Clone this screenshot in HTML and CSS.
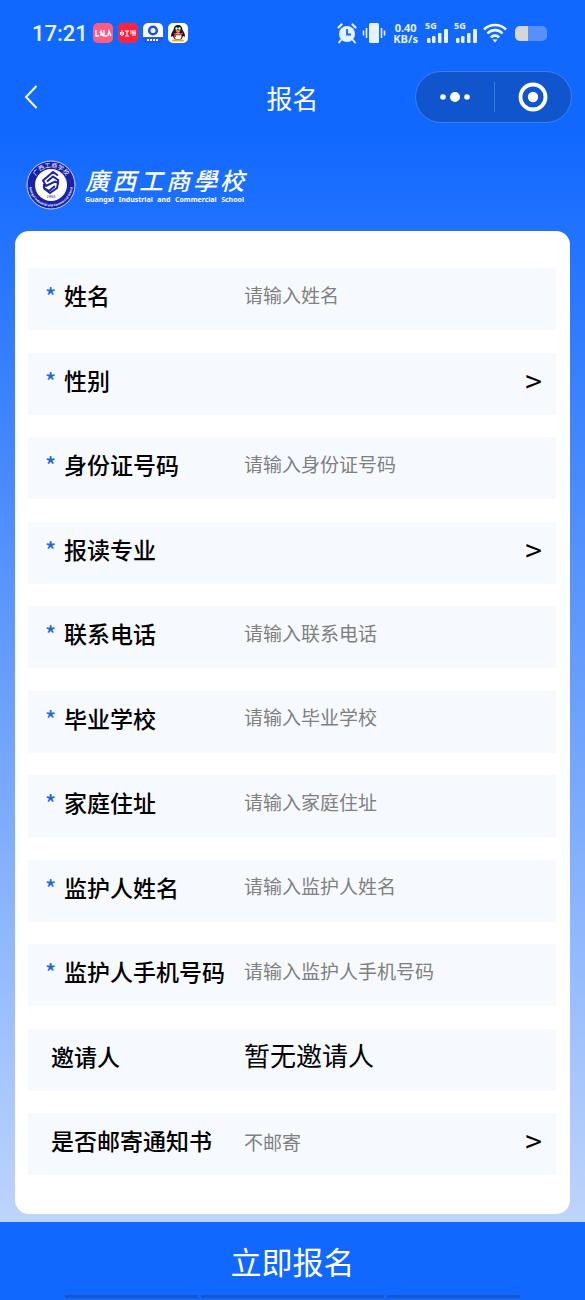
FILE: index.html
```html
<!DOCTYPE html>
<html lang="zh-CN">
<head>
    <meta charset="UTF-8">
    <meta name="viewport" content="width=device-width, initial-scale=1.0">
    <title>报名</title>
    <link rel="stylesheet" href="styles.css">
</head>
<body>

    <div class="status-bar">
        <span class="time">17:21</span>
        <div class="apps">
            <svg width="20" height="20" viewBox="0 0 20 20">
                <rect width="20" height="20" rx="5" fill="#ff5c84"/>
                <path d="M3 7v6h3M8 8v5M11 7v6h3M15 13l1-5 2 5M7 10l1-2 2 5" fill="none" stroke="#fff" stroke-width="1.4"/>
            </svg>
            <svg width="20" height="20" viewBox="0 0 20 20">
                <rect width="20" height="20" rx="5" fill="#fb2440"/>
                <path d="M4 7v6M2.500 9v3M5.500 9v3M7 8h4M9 8v5M7 13h4M12 8h3v5M12 10h6M17 7v6" fill="none" stroke="#fff" stroke-width="1.1"/>
            </svg>
            <svg width="20" height="20" viewBox="0 0 20 20">
                <rect width="20" height="20" rx="5" fill="#1c5ce8"/>
                <path d="M0 14V5a5 5 0 0 1 5-5h10a5 5 0 0 1 5 5v9z" fill="#fff"/>
                <circle cx="10" cy="7.500" r="3.800" fill="none" stroke="#1b55dd" stroke-width="2.600"/>
                <path d="M4 17h12" stroke="#fff" stroke-width="2" stroke-dasharray="2 1"/>
            </svg>
            <svg width="20" height="20" viewBox="0 0 20 20">
                <rect width="20" height="20" rx="5" fill="#fff"/>
                <path d="M10 2c-3 0-4.500 2-4.500 5C4 9 3 11 3 13c0 1 1 1 2 0 1 3 2 4 5 4s4-1 5-4c1 1 2 1 2 0 0-2-1-4-2.500-6 0-3-1.500-5-4.500-5z" fill="#16161c"/>
                <ellipse cx="10" cy="13" rx="3.500" ry="3.500" fill="#fff"/>
                <circle cx="8.500" cy="5.500" r="1.200" fill="#fff"/>
                <circle cx="11.500" cy="5.500" r="1.200" fill="#fff"/>
                <ellipse cx="10" cy="8" rx="2.500" ry="1" fill="#f8a51c"/>
                <path d="M5 9.500c3 1.500 7 1.500 10 0v1.500c-3 1.500-5 1.500-7 1v2H6.500v-3z" fill="#e62b35"/>
                <path d="M5 17.500h4M11 17.500h4" stroke="#f8a51c" stroke-width="2" stroke-linecap="round"/>
            </svg>
        </div>
        <div class="signals">
            <svg width="20" height="22" viewBox="0 0 20 22" fill="none" stroke="#e8f1ff">
                <circle cx="10" cy="12" r="8" fill="#e8f1ff" stroke="none"/>
                <path d="M1.500 5.500l3-3M18.500 5.500l-3-3" stroke-width="2.200" stroke-linecap="round"/>
                <path d="M4 18l-2 2.500M16 18l2 2.500" stroke-width="2" stroke-linecap="round"/>
                <path d="M10 7v5.500h4" stroke="#1168ff" stroke-width="1.800"/>
            </svg>
            <svg width="24" height="22" viewBox="0 0 24 22" fill="#e8f1ff">
                <rect x="7" y="1" width="10" height="20" rx="1.500"/>
                <path d="M4.500 6v10M1.500 8.500v5M19.500 6v10M22.500 8.500v5" stroke="#e8f1ff" stroke-width="1.600"/>
            </svg>
            <div class="speed">
                <span>0.40</span>
                <span>KB/s</span>
            </div>
            <div class="cell">
                <span>5G</span>
                <svg width="24" height="22" viewBox="0 0 24 22" fill="#e8f1ff">
                    <rect x="2" y="16" width="3.500" height="5" rx="1"/>
                    <rect x="7" y="14" width="3.500" height="7" rx="1"/>
                    <rect x="13" y="11" width="3.500" height="10" rx="1"/>
                    <rect x="19" y="7" width="4" height="14" rx="1"/>
                </svg>
            </div>
            <div class="cell">
                <span>5G</span>
                <svg width="24" height="22" viewBox="0 0 24 22" fill="#e8f1ff">
                    <rect x="2" y="16" width="3.500" height="5" rx="1"/>
                    <rect x="7" y="14" width="3.500" height="7" rx="1"/>
                    <rect x="13" y="11" width="3.500" height="10" rx="1"/>
                    <rect x="19" y="7" width="4" height="14" rx="1"/>
                </svg>
            </div>
            <svg width="24" height="20" viewBox="0 0 24 20" fill="none" stroke="#f2f7ff" stroke-width="2.600">
                <path d="M1 6.500c6-6 16-6 22 0M4.500 10.500c4-4.500 11-4.500 15 0M8 14.500c2-2.500 6-2.500 8 0"/>
                <path d="M9.500 16.500h5L12 19.500z" fill="#f2f7ff" stroke="none"/>
            </svg>
            <span class="battery"></span>
        </div>
    </div>

    <div class="nav-bar">
        <button class="back" type="button" aria-label="返回">
            <svg width="16" height="26" viewBox="0 0 16 26" fill="none" stroke="#fff" stroke-width="2">
                <path d="M13.500 2L3 13l10.500 11"/>
            </svg>
        </button>
        <h1>报名</h1>
        <div class="capsule">
            <button type="button" aria-label="更多">
                <svg width="32" height="12" viewBox="0 0 32 12" fill="#fff">
                    <circle cx="4" cy="6" r="2.800"/>
                    <circle cx="16" cy="6" r="5"/>
                    <circle cx="28" cy="6" r="2.800"/>
                </svg>
            </button>
            <button type="button" aria-label="关闭">
                <svg width="30" height="30" viewBox="0 0 30 30">
                    <circle cx="15" cy="15" r="12.500" fill="none" stroke="#fff" stroke-width="3.800"/>
                    <circle cx="15" cy="15" r="5.200" fill="#fff"/>
                </svg>
            </button>
        </div>
    </div>

    <div class="school">
        <svg width="50" height="50" viewBox="0 0 50 50">
            <defs>
                <path id="sealTop" d="M7.500 25a17.500 17.500 0 0 1 35 0"/>
                <path id="sealBottom" d="M3.500 21a21.800 21.800 0 1 0 43 0"/>
            </defs>
            <circle cx="25" cy="25" r="24" fill="#1a23a8" stroke="#c3d0fa" stroke-width="1"/>
            <circle cx="25" cy="25" r="16" fill="#fff"/>
            <text class="seal-cn"><textPath href="#sealTop" startOffset="50%">广西工商学校</textPath></text>
            <text class="seal-en"><textPath href="#sealBottom" startOffset="50%">Guangxi Industrial and Commercial School</textPath></text>
            <path d="M32 15.500l-5-3.500-10 8.500 3 5.500 9-4.500 3 1.500-1 5-7 5-6-4.500M21 21.500l6-5 5 3.500v2.500M18 24v4l5 3 6-5" fill="none" stroke="#1a23a8" stroke-width="2"/>
            <text class="seal-year" x="25" y="38">1964</text>
        </svg>
        <div class="school-name">
            <p class="name-cn"><span>廣</span><span>西</span><span>工</span><span>商</span><span>學</span><span>校</span></p>
            <p class="name-en">Guangxi Industrial and Commercial School</p>
        </div>
    </div>

    <form class="card" id="signup">
        <div class="row">
            <label class="required" for="name">姓名</label>
            <input id="name" type="text" placeholder="请输入姓名">
        </div>
        <div class="row">
            <label class="required" for="gender">性别</label>
            <select id="gender">
                <option value=""></option>
                <option>男</option>
                <option>女</option>
            </select>
            <span class="arrow">&gt;</span>
        </div>
        <div class="row">
            <label class="required" for="idcard">身份证号码</label>
            <input id="idcard" type="text" placeholder="请输入身份证号码">
        </div>
        <div class="row">
            <label class="required" for="major">报读专业</label>
            <select id="major">
                <option value=""></option>
            </select>
            <span class="arrow">&gt;</span>
        </div>
        <div class="row">
            <label class="required" for="phone">联系电话</label>
            <input id="phone" type="tel" placeholder="请输入联系电话">
        </div>
        <div class="row">
            <label class="required" for="school">毕业学校</label>
            <input id="school" type="text" placeholder="请输入毕业学校">
        </div>
        <div class="row">
            <label class="required" for="address">家庭住址</label>
            <input id="address" type="text" placeholder="请输入家庭住址">
        </div>
        <div class="row">
            <label class="required" for="guardian">监护人姓名</label>
            <input id="guardian" type="text" placeholder="请输入监护人姓名">
        </div>
        <div class="row">
            <label class="required" for="guardianPhone">监护人手机号码</label>
            <input id="guardianPhone" type="tel" placeholder="请输入监护人手机号码">
        </div>
        <div class="row">
            <label for="inviter">邀请人</label>
            <input class="inviter" id="inviter" type="text" value="暂无邀请人" readonly>
        </div>
        <div class="row">
            <label for="mail">是否邮寄通知书</label>
            <select id="mail">
                <option>不邮寄</option>
                <option>邮寄</option>
            </select>
            <span class="arrow">&gt;</span>
        </div>
    </form>

    <div class="footer">
        <button class="submit" type="submit" form="signup">立即报名</button>
        <div class="gesture-bar"><span></span><span></span><span></span></div>
    </div>

</body>
</html>
```

FILE: styles.css
```css
* {
    box-sizing: border-box;
}

body {
    font-family: "Noto Sans CJK SC", sans-serif;
    background: linear-gradient(180deg, #1168ff 0, #1168ff 130px, #bfd5fb 1230px);
    color: #000;
    margin: 0;
    min-height: 100vh;
    display: flex;
    flex-direction: column;
}

button {
    background: none;
    border: none;
    padding: 0;
    color: #fff;
    font-family: inherit;
    cursor: pointer;
    display: flex;
    align-items: center;
    justify-content: center;
}

svg {
    display: block;
    flex-shrink: 0;
}

/* status bar */
.status-bar {
    display: flex;
    align-items: center;
    height: 66px;
    padding: 0 38px 0 32px;
    color: #e8f1ff;
    font-family: "Noto Sans", sans-serif;
}

.time {
    font-family: Roboto, sans-serif;
    font-size: 22px;
    font-weight: 500;
}

.apps {
    display: flex;
    gap: 5px;
    margin-left: 5px;
}

.signals {
    display: flex;
    align-items: center;
    gap: 5px;
    margin-left: auto;
}

.speed {
    display: flex;
    flex-direction: column;
    margin: 0 2px;
    font-family: "Open Sans", sans-serif;
    font-size: 11px;
    line-height: 11px;
    font-weight: 700;
    text-align: center;
}

.cell {
    position: relative;
}

.cell span {
    position: absolute;
    top: -1px;
    left: 0;
    font-size: 9px;
    line-height: 9px;
    font-weight: 700;
}

.battery {
    width: 32px;
    height: 15px;
    margin-left: 3px;
    border-radius: 5px;
    background: linear-gradient(90deg, #d6d6d8 40%, #5790fa 40%);
}

/* navigation */
.nav-bar {
    display: grid;
    grid-template-columns: 1fr auto 1fr;
    align-items: center;
    height: 62px;
    padding: 0 13px;
}

.back {
    justify-self: start;
    padding-left: 10px;
}

.nav-bar h1 {
    margin: 0;
    color: #fff;
    font-size: 26px;
    font-weight: 400;
}

.capsule {
    justify-self: end;
    display: grid;
    grid-template-columns: 1fr 1fr;
    width: 157px;
    height: 52px;
    border: 1px solid #3c7df0;
    border-radius: 26px;
    background: #1055cc;
}

.capsule button {
    margin: 10px 0;
}

.capsule button + button {
    border-left: 1px solid #3f78d8;
}

/* school logo */
.school {
    display: flex;
    align-items: center;
    gap: 9px;
    padding: 32px 26px 21px;
}

.school-name {
    width: 159px;
    color: #fff;
}

.school-name p {
    margin: 0;
    white-space: nowrap;
}

.name-cn {
    display: flex;
    justify-content: space-between;
    font-family: "Noto Sans CJK TC", sans-serif;
    font-size: 24px;
    line-height: 30px;
    font-weight: 500;
    font-style: italic;
}

.name-en {
    font-family: "Noto Sans", sans-serif;
    font-size: 7px;
    line-height: 10px;
    font-weight: 700;
    text-align-last: justify;
}

.seal-cn,
.seal-en,
.seal-year {
    fill: #fff;
    font-size: 6px;
    text-anchor: middle;
}

.seal-en {
    font-size: 3px;
    font-weight: 700;
}

.seal-year {
    fill: #1a23a8;
    font-size: 4px;
}

/* form */
.card {
    flex: 1;
    display: flex;
    flex-direction: column;
    justify-content: space-between;
    gap: 8px;
    margin: 0 15px 8px;
    padding: 37px 14px 39px 13px;
    border-radius: 14px;
    background: #fff;
}

.row {
    display: flex;
    align-items: center;
    height: 62px;
    padding: 0 14px 8px 23px;
    background: #f6f9fe;
}

.row label {
    width: 193px;
    flex-shrink: 0;
    font-size: 23px;
    font-weight: 500;
    white-space: nowrap;
}

.required::before {
    content: "*";
    display: inline-block;
    width: 13px;
    margin-left: -6px;
    margin-right: 6px;
    color: #1e6bdc;
}

.row input,
.row select {
    flex: 1;
    min-width: 0;
    height: 40px;
    padding: 0;
    border: none;
    outline: none;
    background: none;
    appearance: none;
    color: #808080;
    font-family: inherit;
    font-size: 19px;
}

.row input {
    padding-bottom: 2px;
}

.row select {
    padding-top: 2px;
}

.row input::placeholder {
    color: #808080;
}

.row .inviter {
    color: #000;
    font-size: 26px;
}

.arrow {
    font-size: 30px;
    line-height: 40px;
}

/* submit */
.footer {
    background: #1168ff;
}

.submit {
    width: 100%;
    height: 73px;
    padding-top: 4px;
    font-size: 31px;
}

.gesture-bar {
    display: grid;
    grid-template-columns: 133fr 183fr 133fr;
    gap: 3px;
    height: 5px;
    padding: 0 65px 2px;
}

.gesture-bar span {
    background: #1458cc;
}
```
